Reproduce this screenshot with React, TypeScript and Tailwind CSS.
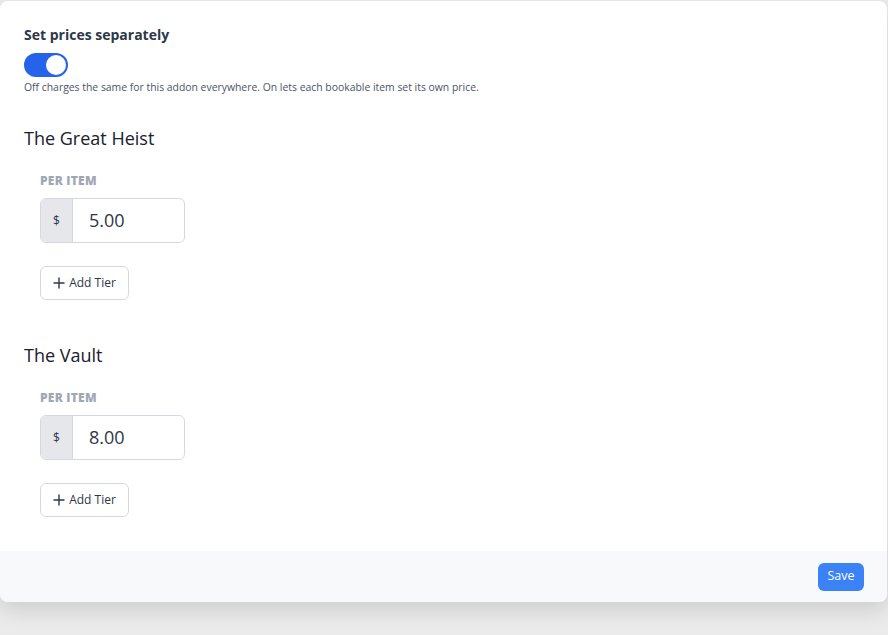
import React, { useState } from "react";

type Item = { name: string; price: string };

const items: Item[] = [
  { name: "The Great Heist", price: "5.00" },
  { name: "The Vault", price: "8.00" },
];

function PlusIcon() {
  return (
    <svg width="12" height="12" viewBox="0 0 12 12" fill="none" stroke="currentColor" strokeWidth="1.4" strokeLinecap="round">
      <path d="M6 1v10M1 6h10" />
    </svg>
  );
}

function ItemPricing({ item }: { item: Item }) {
  return (
    <section className="mt-[43px] first:mt-0">
      <h2 className="text-[18px] leading-[24px] text-[#1a202c]">{item.name}</h2>
      <div className="pl-4 pt-[23px]">
        <div className="text-[12px] leading-[15px] font-extrabold tracking-[0.02em] text-[#a0a7b4] uppercase">Per item</div>
        <div className="mt-[10px] flex h-[45px] w-[145px] rounded-md border border-[#d5d9df] overflow-hidden">
          <span className="flex w-[32px] items-center justify-center bg-[#e5e7eb] border-r border-[#d5d9df] text-[12px] text-[#2d3748]">$</span>
          <span className="flex items-center pl-4 text-[18px] text-[#2d3748]">{item.price}</span>
        </div>
        <button className="mt-[23px] flex h-[34px] w-[89px] items-center justify-center gap-1 rounded-md border border-[#d5d9df] bg-white text-[12px] text-[#2d3748]">
          <PlusIcon />
          <span>Add Tier</span>
        </button>
      </div>
    </section>
  );
}

export default function App() {
  const [separate, setSeparate] = useState(true);
  return (
    <div className="h-[635px] w-[888px] bg-[#ebebeb] pt-px" style={{ fontFamily: '"Open Sans", "Noto Sans", sans-serif' }}>
      <div className="w-[887px] overflow-hidden rounded-lg bg-white shadow-[0_8px_22px_rgba(0,0,0,0.13)]">
        <div className="px-6 pt-[25px] pb-[34px]">
          <div className="text-[14px] leading-[18px] font-bold text-[#2d3748]">Set prices separately</div>
          <button
            onClick={() => setSeparate(!separate)}
            className={`mt-[9px] flex h-[24px] w-[44px] items-center rounded-full px-[2px] ${separate ? "bg-[#2563eb] justify-end" : "bg-[#cbd5e0] justify-start"}`}
          >
            <span className="block h-[20px] w-[20px] rounded-full bg-white" />
          </button>
          <p className="mt-[3px] text-[10.4px] leading-[14px] text-[#4a5568]">
            Off charges the same for this addon everywhere. On lets each bookable item set its own price.
          </p>
          <div className="mt-[32px]">
            {items.map((it) => (
              <ItemPricing key={it.name} item={it} />
            ))}
          </div>
        </div>
        <div className="flex h-[51px] items-center justify-end bg-[#f8f9fb] pr-[23px]">
          <button className="h-[28px] w-[46px] rounded-md bg-[#3b82f6] text-[12.5px] text-white">Save</button>
        </div>
      </div>
    </div>
  );
}
